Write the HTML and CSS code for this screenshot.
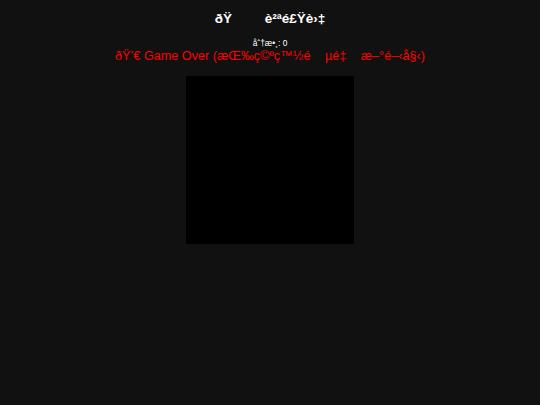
FILE: index.html
```html
<!DOCTYPE html>
<html>
<head>
<meta charset="utf-8">
<link rel="stylesheet" href="styles.css">
</head>
<body>
<main class="page">
  <h1 class="title">ðŸ<span class="cc">&#x90;</span><span class="cc">&#x8D;</span> è²ªé£Ÿè›‡</h1>
  <div class="score">åˆ†æ•¸: 0</div>
  <div class="gameover">ðŸ’€ Game Over (æŒ‰ç©ºç™½é<span class="cc">&#x8D;</span>µé‡<span class="cc">&#x8D;</span>æ–°é–‹å§‹)</div>
  <div class="board"></div>
</main>
</body>
</html>
```
FILE: styles.css
```css
html, body {
  margin: 0;
  padding: 0;
  background: #111111;
}
.page {
  display: flex;
  flex-direction: column;
  align-items: center;
  font-family: "Liberation Sans", Arial, sans-serif;
  color: #ffffff;
  text-align: center;
}
.title {
  margin: 11px 0 0 0;
  font-size: 13.5px;
  line-height: 16px;
  font-weight: bold;
}
.cc {
  display: inline-block;
  width: 14.5px;
  height: 0;
  vertical-align: top;
}
.score {
  margin-top: 11px;
  font-size: 8.4px;
  line-height: 10px;
}
.gameover {
  margin-top: 0.5px;
  font-size: 12.66px;
  line-height: 15px;
  color: #ff0000;
}
.board {
  margin-top: 12.2px;
  width: 168.75px;
  height: 168.75px;
  background: #000000;
}
```
